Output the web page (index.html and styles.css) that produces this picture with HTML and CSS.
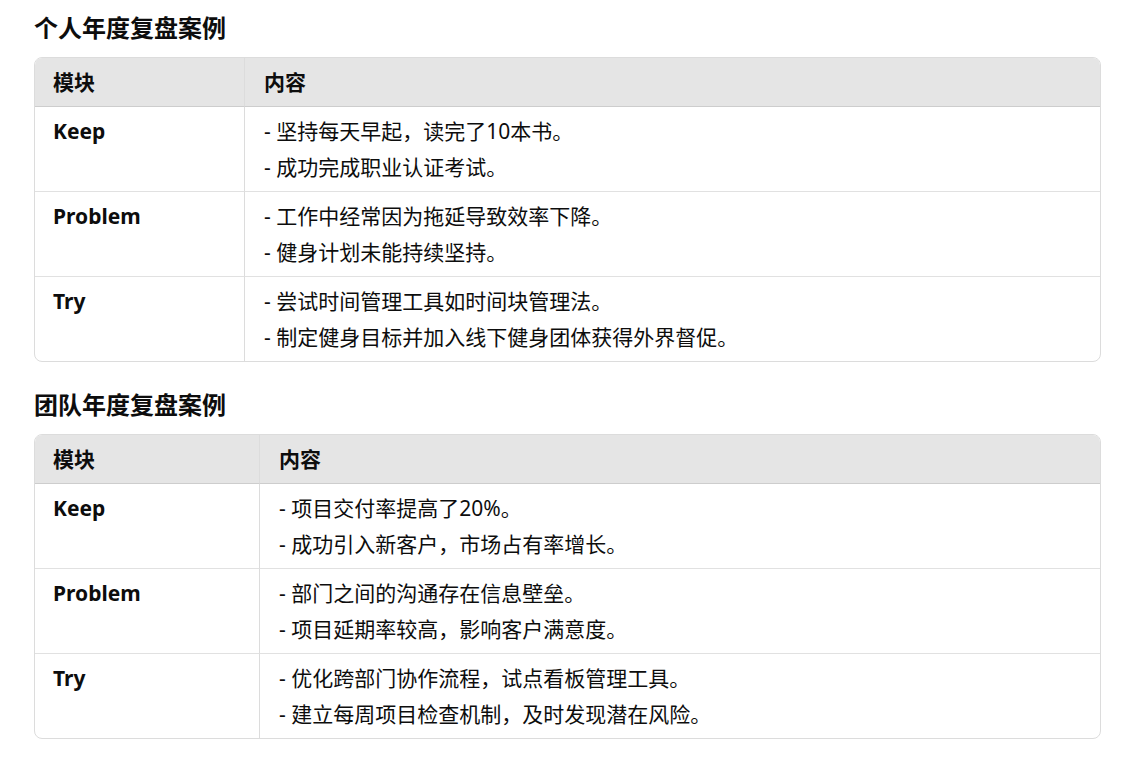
FILE: index.html
```html
<!DOCTYPE html>
<html lang="zh-CN">
<head>
<meta charset="utf-8">
<title>年度复盘案例</title>
<link rel="stylesheet" href="styles.css">
</head>
<body>
<main class="page">
  <h3 class="title">个人年度复盘案例</h3>
  <div class="table-wrap">
    <table class="review">
      <colgroup><col class="col-a"><col></colgroup>
      <thead>
        <tr><th>模块</th><th class="sep">内容</th></tr>
      </thead>
      <tbody>
        <tr>
          <td class="mod">Keep</td>
          <td class="sep"><div>- 坚持每天早起，读完了10本书。</div><div>- 成功完成职业认证考试。</div></td>
        </tr>
        <tr>
          <td class="mod">Problem</td>
          <td class="sep"><div>- 工作中经常因为拖延导致效率下降。</div><div>- 健身计划未能持续坚持。</div></td>
        </tr>
        <tr>
          <td class="mod">Try</td>
          <td class="sep"><div>- 尝试时间管理工具如时间块管理法。</div><div>- 制定健身目标并加入线下健身团体获得外界督促。</div></td>
        </tr>
      </tbody>
    </table>
  </div>

  <h3 class="title">团队年度复盘案例</h3>
  <div class="table-wrap">
    <table class="review">
      <colgroup><col class="col-b"><col></colgroup>
      <thead>
        <tr><th>模块</th><th class="sep">内容</th></tr>
      </thead>
      <tbody>
        <tr>
          <td class="mod">Keep</td>
          <td class="sep"><div>- 项目交付率提高了20%。</div><div>- 成功引入新客户，市场占有率增长。</div></td>
        </tr>
        <tr>
          <td class="mod">Problem</td>
          <td class="sep"><div>- 部门之间的沟通存在信息壁垒。</div><div>- 项目延期率较高，影响客户满意度。</div></td>
        </tr>
        <tr>
          <td class="mod">Try</td>
          <td class="sep"><div>- 优化跨部门协作流程，试点看板管理工具。</div><div>- 建立每周项目检查机制，及时发现潜在风险。</div></td>
        </tr>
      </tbody>
    </table>
  </div>
</main>
</body>
</html>
```

FILE: styles.css
```css
html, body {
  margin: 0;
  padding: 0;
  background: #ffffff;
}

body {
  font-family: "Noto Sans", "Noto Sans CJK SC", sans-serif;
  color: #0d0d0d;
}

.page {
  padding: 12px 0 0 34px;
  width: 1067px;
}

.title {
  margin: 0 0 13px;
  font-size: 24px;
  line-height: 32px;
  font-weight: 700;
}

.table-wrap {
  border: 1px solid #dcdcdc;
  border-radius: 8px;
  overflow: hidden;
  margin-bottom: 27px;
}

.review {
  width: 100%;
  border-collapse: separate;
  border-spacing: 0;
  table-layout: fixed;
  font-size: 21px;
  line-height: 36px;
}

.col-a { width: 209px; }
.col-b { width: 224px; }

.review th {
  background: #e5e5e5;
  text-align: left;
  font-weight: 700;
  padding: 6px 19px 6px 18px;
  border-bottom: 1px solid #cdcdcd;
}

.review td {
  padding: 6px 19px 6px 18px;
  vertical-align: top;
  border-bottom: 1px solid #e1e1e1;
}

.review tbody tr:last-child td {
  border-bottom: none;
}

.review .sep {
  border-left: 1px solid #dcdcdc;
  padding-left: 19px;
}

.review .mod {
  font-weight: 700;
}
```
